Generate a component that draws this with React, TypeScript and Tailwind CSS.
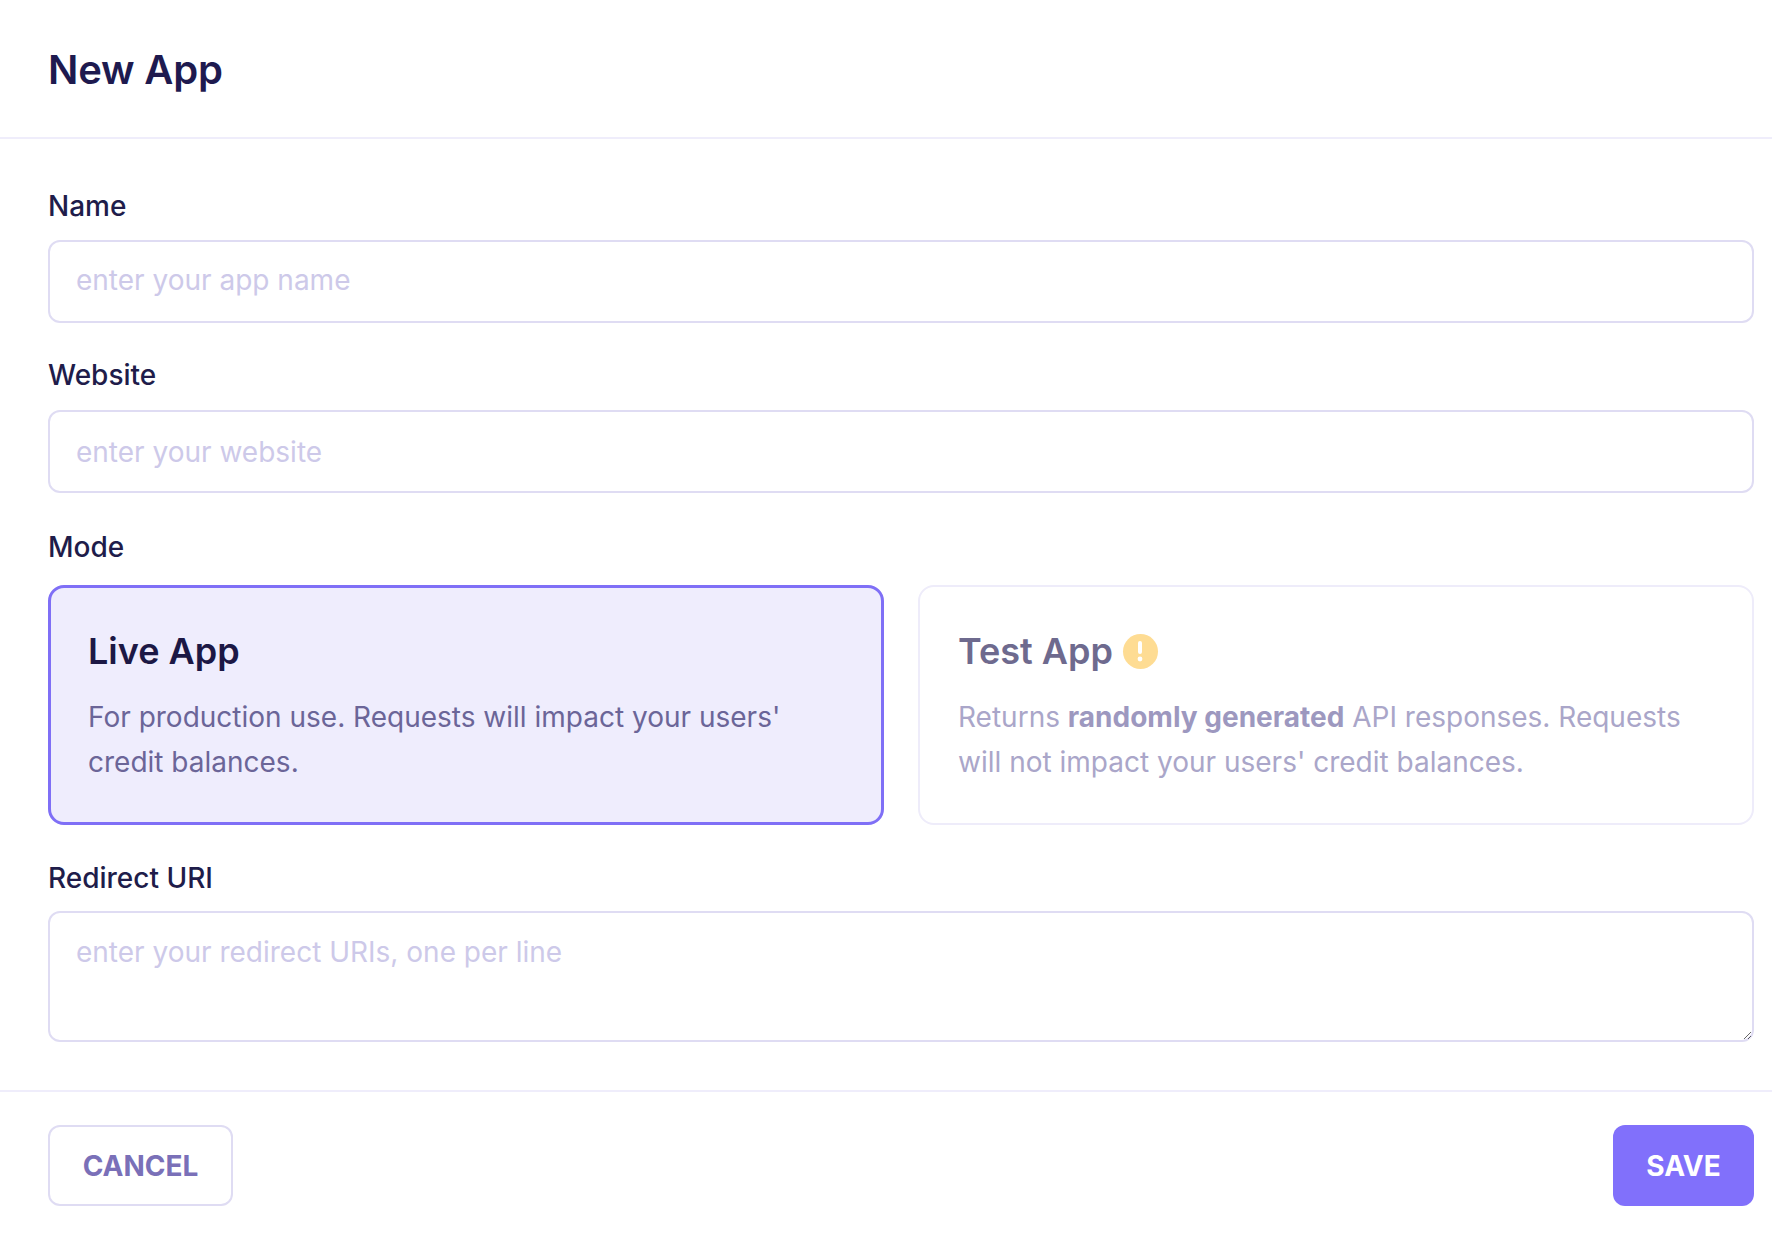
import React from "react";

export default function App() {
  return (
    <div className="w-[1772px] h-[1240px] bg-white overflow-hidden flex flex-col" style={{ fontFamily: "Inter, 'Noto Sans', sans-serif" }}>
      <div className="h-[137px] pt-[46px] pl-[48px] shrink-0">
        <h1 className="text-[40px] leading-[48px] font-semibold text-[#1e1a4f] tracking-[-0.2px]">New App</h1>
      </div>
      <div className="h-[2px] bg-[#efedfb] shrink-0" />
      <div className="pl-[48px] pr-[18px] pt-[50px] flex flex-col">
        <label className="text-[28px] leading-[34px] font-medium text-[#201c4a]">Name</label>
        <input
          placeholder="enter your app name"
          className="mt-[17px] h-[83px] w-full rounded-[12px] border-2 border-[#dfdcf3] bg-white pl-[26px] pb-[3px] text-[28px] text-[#201c4a] placeholder:text-[#cdc9e9] outline-none"
        />
        <label className="mt-[35px] text-[28px] leading-[34px] font-medium text-[#201c4a]">Website</label>
        <input
          placeholder="enter your website"
          className="mt-[18px] h-[83px] w-full rounded-[12px] border-2 border-[#dfdcf3] bg-white pl-[26px] text-[28px] text-[#201c4a] placeholder:text-[#cdc9e9] outline-none"
        />
        <label className="mt-[37px] text-[28px] leading-[34px] font-medium text-[#201c4a]">Mode</label>
        <div className="mt-[21px] grid grid-cols-2 gap-[34px]">
          <div className="h-[240px] rounded-[16px] border-[3px] border-[#7f6ff6] bg-[#efedfd] pl-[37px] pr-[30px] pt-[41px]">
            <div className="text-[36px] leading-[44px] font-semibold text-[#1c1845]">Live App</div>
            <p className="mt-[22px] text-[28px] leading-[45px] text-[#6b6598]">
              For production use. Requests will impact your users' credit balances.
            </p>
          </div>
          <div className="h-[240px] rounded-[16px] border-2 border-[#eeecfa] bg-white pl-[38px] pr-[30px] pt-[42px]">
            <div className="flex items-center">
              <span className="text-[36px] leading-[44px] font-semibold text-[#6e6a8e]">Test App</span>
              <span className="ml-[10px] flex h-[35px] w-[35px] shrink-0 items-center justify-center rounded-full bg-[#fedc93]">
                <svg width="8" height="24" viewBox="0 0 8 24">
                  <rect x="2" y="2" width="4" height="13" rx="2" fill="#ffffff" />
                  <circle cx="4" cy="20" r="2.4" fill="#ffffff" />
                </svg>
              </span>
            </div>
            <p className="mt-[22px] text-[28px] leading-[45px] text-[#aaa6c9]">
              Returns <span className="font-bold text-[#9d98bf]">randomly generated</span> API responses. Requests will not impact your users' credit balances.
            </p>
          </div>
        </div>
        <label className="mt-[36px] text-[28px] leading-[34px] font-medium text-[#201c4a]">Redirect URI</label>
        <textarea
          placeholder="enter your redirect URIs, one per line"
          className="mt-[16px] h-[131px] w-full rounded-[12px] border-2 border-[#dfdcf3] bg-white pl-[26px] pt-[22px] text-[28px] leading-[34px] text-[#201c4a] placeholder:text-[#cdc9e9] outline-none"
        />
      </div>
      <div className="mt-[48px] h-[2px] bg-[#efedfb] shrink-0" />
      <div className="pl-[48px] pr-[18px] pt-[33px] flex items-center justify-between">
        <button className="h-[81px] w-[185px] rounded-[12px] border-2 border-[#dfdcf3] bg-white text-[28px] font-bold text-[#7a70b8]">
          CANCEL
        </button>
        <button className="h-[81px] w-[141px] rounded-[12px] bg-[#8170fb] text-[28px] font-bold text-white">
          SAVE
        </button>
      </div>
    </div>
  );
}
